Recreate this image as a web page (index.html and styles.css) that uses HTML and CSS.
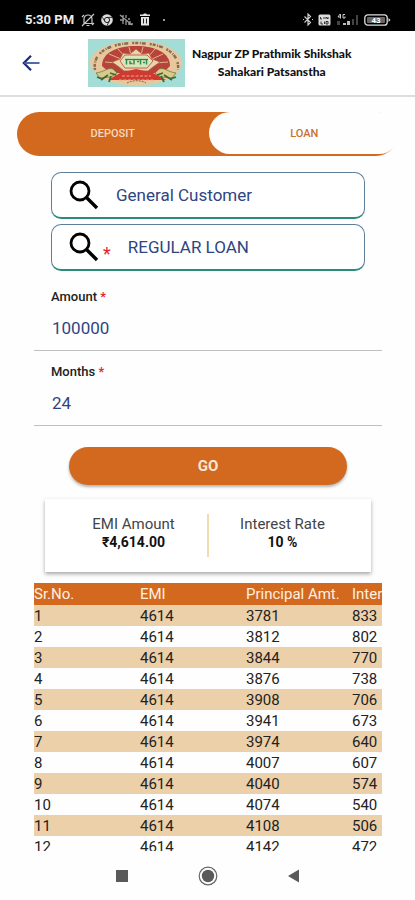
FILE: index.html
```
<!DOCTYPE html>
<html lang="en">
<head>
<meta charset="UTF-8">
<meta name="viewport" content="width=device-width, initial-scale=1">
<title>EMI Calculator</title>
<link rel="stylesheet" href="styles.css">
</head>
<body>
	<div class="status">
		<span class="time">5:30 PM</span>
		<svg class="s-bell" width="14" height="14" viewBox="0 0 14 14" fill="none" stroke="#c8c8c8" stroke-width="1.2"><path d="M3 10.500V6a4 4 0 0 1 8 0v4.500zM5.500 12.500h3M1 13L13 1M1 4l2-2M11 12l2-2"/></svg>
		<svg class="s-chrome" width="12" height="12" viewBox="0 0 12 12"><circle cx="6" cy="6" r="5.800" fill="#ddd"/><circle cx="6" cy="6" r="2.600" fill="#ddd" stroke="#222" stroke-width="1"/><path d="M6 3.400h5M3.800 7.300L1.400 3.300M8.200 7.300L6 11.500" stroke="#222" stroke-width=".9"/></svg>
		<svg class="s-mute" width="14" height="12" viewBox="0 0 14 12" fill="none" stroke="#999" stroke-width="1.300"><path d="M1 1l12 10M4 1v9M7 1v3M7 6v5M1 6h4M9 5h2M9 10h5M11 7v4"/></svg>
		<svg class="s-trash" width="12" height="13" viewBox="0 0 12 13"><path d="M1 1.500h3L5 .5h2l1 1h3v1.500H1zM2 4h8v8.500H2z" fill="#e4e4e4"/><path d="M4.500 5.500v5M7.500 5.500v5" stroke="#222"/></svg>
		<span class="dot"></span>
		<div class="status-right">
			<svg width="10" height="13" viewBox="0 0 10 13" fill="none" stroke="#ccc" stroke-width="1.200"><path d="M1.500 3.500l6 6L5 12V1l2.500 2.500-6 6M0 6.500h1M9 6.500h1"/></svg>
			<svg width="13" height="12" viewBox="0 0 13 12"><rect x=".5" y=".5" width="12" height="11" rx="1.500" fill="#ddd"/><path d="M2.500 3v2l1.500 0M6 3v2M8 5V3l2 2V3M3 7.500v2.500h2M6.500 7.500v2.500M8 10V7.500h2V10z" fill="none" stroke="#222" stroke-width=".9"/></svg>
			<svg class="s-signal" width="23" height="13" viewBox="0 0 23 13"><path d="M4 1L2 4h3M4.500 1v4.500M9 1.500H7v3.500h2V3.500" fill="none" stroke="#ccc"/><path d="M7 12v-2h3v2zM11 12V8h3v4z" fill="#bbb"/><path d="M1 8h3v4H1zM16 12V6h2v6zM20 12V2h2v10z" fill="#444"/></svg>
			<svg width="27" height="12" viewBox="0 0 27 12"><rect x=".8" y=".8" width="22.400" height="10.400" rx="3" fill="none" stroke="#ddd" stroke-width="1.300"/><rect x="3" y="3" width="18" height="6" rx="1" fill="#666"/><path d="M24.500 4v4l2-2z" fill="#ddd"/><text x="12" y="9" text-anchor="middle" class="battery-text">43</text></svg>
		</div>
	</div>

	<header class="header">
		<a href="#" class="back" aria-label="Back">
			<svg width="18" height="16" viewBox="0 0 18 16" fill="none" stroke="#1b2a7a" stroke-width="2.200"><path d="M9 .8L1.800 8 9 15.200"/><path d="M2 8h15.500" stroke="#3f5aa0" stroke-width="1.800"/></svg>
		</a>
		<svg class="logo" width="97" height="48" viewBox="0 0 97 48" role="img" aria-label="Nagpur ZP Prathmik Shikshak">
			<rect width="97" height="48" fill="#a3ddd5"/>
			<ellipse cx="48" cy="24" rx="46" ry="22.500" fill="#e9c79d"/>
			<path d="M7 31C4 12 24 4 48 4s44 8 42 27" fill="none" stroke="#80705a" stroke-width="2.500" stroke-dasharray="2 1 3 1.500 1 1 4 4"/>
			<path d="M14 27C14 14 28 7 48 7s34 7 34 20l-7 7H22z" fill="#b8433a"/>
			<path d="M17 23l13 1M21 15l12 5M30 10l7 8M41 8l2 8M55 8l-2 8M67 10l-7 8M75 15l-11 5M80 23l-13 1" stroke="#e1b38c"/>
			<path d="M24 23l8-3 3-6 7 1 6-5 6 5 7-1 3 6 8 3-7 5-5 4H36l-5-4z" fill="#e8d5ae" stroke="#a9613b" stroke-width=".8"/>
			<path d="M32 22l5-6h22l6 6-6 7H37z" fill="#dde3bb" stroke="#c7644e"/>
			<path d="M37 20.500h23" stroke="#26874b" stroke-width="1.300"/>
			<path d="M38.500 21v4.500M42 22v2.500h2.500M46 21v4.500M49 22.500h2M52.500 21v4.500M55 23.500h2M58.500 21v4.500" fill="none" stroke="#2f8f52" stroke-width="1.500"/>
			<path d="M32 34l16-4 17 4 13 7H20z" fill="#cf392f"/>
			<path d="M34 37h29M31 41h35" stroke="#eaa68b" stroke-dasharray="3 1.500"/>
			<path d="M39 44c6-3 14-3 19 0" fill="none" stroke="#8d6745" stroke-dasharray="2 1"/>
			<path d="M8 34c8-1 12-6 17-4l4 4-6 4-11 1z" fill="#d9c98d" stroke="#697b3c" stroke-width=".8"/>
			<path d="M88 34c-8-1-12-6-17-4l-4 4 6 4 11 1z" fill="#d9c98d" stroke="#697b3c" stroke-width=".8"/>
			<path d="M22 34l6 2M20 36l-7 5M23 37l-2 6M9 38l5 2M75 34l-6 2M76 36l8 5M73 37l3 6M88 38l-6 2" stroke="#3f6a35" stroke-width="1.800"/>
		</svg>
		<h1 class="title">Nagpur ZP Prathmik Shikshak<br>Sahakari Patsanstha</h1>
	</header>

	<main class="main">
		<div class="tabs">
			<button type="button" class="tab">DEPOSIT</button>
			<button type="button" class="tab active">LOAN</button>
		</div>

		<form class="form">
			<button type="button" class="picker">
				<svg width="30" height="30" viewBox="0 0 30 30" fill="none" stroke="#000"><circle cx="11" cy="11" r="9" stroke-width="2.800"/><path d="M17.500 17.500L28 28" stroke-width="3.400"/></svg>
				<span class="picker-text">General Customer</span>
			</button>
			<button type="button" class="picker">
				<svg width="30" height="30" viewBox="0 0 30 30" fill="none" stroke="#000"><circle cx="11" cy="11" r="9" stroke-width="2.800"/><path d="M17.500 17.500L28 28" stroke-width="3.400"/></svg>
				<span class="star big">*</span>
				<span class="picker-text">REGULAR LOAN</span>
			</button>

			<div class="field">
				<label for="amount">Amount <span class="star">*</span></label>
				<input type="text" id="amount" value="100000">
			</div>
			<div class="field">
				<label for="months">Months <span class="star">*</span></label>
				<input type="text" id="months" value="24">
			</div>

			<button type="button" class="go">GO</button>
		</form>

		<div class="result">
			<div class="result-item">EMI Amount<strong>₹4,614.00</strong></div>
			<div class="result-item">Interest Rate<strong>10 %</strong></div>
		</div>

		<div class="table-wrap">
			<table class="schedule">
				<thead>
					<tr><th>Sr.No.</th><th>EMI</th><th>Principal Amt.</th><th>Interest</th></tr>
				</thead>
				<tbody>
					<tr><td>1</td><td>4614</td><td>3781</td><td>833</td></tr>
					<tr><td>2</td><td>4614</td><td>3812</td><td>802</td></tr>
					<tr><td>3</td><td>4614</td><td>3844</td><td>770</td></tr>
					<tr><td>4</td><td>4614</td><td>3876</td><td>738</td></tr>
					<tr><td>5</td><td>4614</td><td>3908</td><td>706</td></tr>
					<tr><td>6</td><td>4614</td><td>3941</td><td>673</td></tr>
					<tr><td>7</td><td>4614</td><td>3974</td><td>640</td></tr>
					<tr><td>8</td><td>4614</td><td>4007</td><td>607</td></tr>
					<tr><td>9</td><td>4614</td><td>4040</td><td>574</td></tr>
					<tr><td>10</td><td>4614</td><td>4074</td><td>540</td></tr>
					<tr><td>11</td><td>4614</td><td>4108</td><td>506</td></tr>
					<tr><td>12</td><td>4614</td><td>4142</td><td>472</td></tr>
				</tbody>
			</table>
		</div>
	</main>

	<nav class="navbar">
		<button type="button" aria-label="Recent apps"><svg width="20" height="20" viewBox="0 0 20 20"><rect x="4" y="4" width="12" height="12" fill="#5a5a5a"/></svg></button>
		<button type="button" aria-label="Home"><svg width="20" height="20" viewBox="0 0 20 20"><circle cx="10" cy="10" r="8.800" fill="none" stroke="#666" stroke-width="1.200"/><circle cx="10" cy="10" r="6.200" fill="#5a5a5a"/></svg></button>
		<button type="button" aria-label="Back"><svg width="20" height="20" viewBox="0 0 20 20"><path d="M15 3.500v13L4 10z" fill="#5a5a5a"/></svg></button>
	</nav>
</body>
</html>
```

FILE: styles.css
```
* { padding: 0; margin: 0; box-sizing: border-box; }
body { display: flex; flex-direction: column; height: 100vh; overflow: hidden; background: #fefefe; font-family: Roboto, "Noto Sans", sans-serif; font-size: 16px; color: #222; }
button { border: none; background: none; font-family: inherit; cursor: pointer; }
svg { display: block; flex: none; }

/* status bar */
.status { display: flex; align-items: center; flex: none; height: 31px; padding: 8px 24px 0 25px; background: #000; color: #eee; }
.time { margin-right: 7px; font-size: 13px; font-weight: bold; }
.s-bell, .s-chrome, .s-mute { margin-right: 6px; }
.dot { width: 2px; height: 2px; margin-left: 12px; border-radius: 50%; background: #ccc; }
.status-right { display: flex; align-items: center; gap: 5px; margin-left: auto; }
.battery-text { font-size: 8px; font-weight: bold; fill: #fff; }

/* header */
.header { display: flex; align-items: center; flex: none; height: 66px; padding: 0 24px 0 22px; border-bottom: 2px solid #dcdedf; background: #fff; }
.back { margin-right: 48px; }
.title { margin-left: 7px; font-family: Lato, sans-serif; font-size: 12px; line-height: 18px; font-weight: 900; text-align: center; color: #111; }

.main { flex: 1; min-height: 0; overflow: hidden; padding-top: 15px; }

/* tabs */
.tabs { display: flex; height: 44px; margin: 0 17px; padding-bottom: 2px; border-radius: 22px; background: #d2691e; }
.tab { flex: 1; font-size: 11px; font-weight: 500; color: #f6d9c3; }
.tab.active { margin-right: -2px; border-radius: 22px; background: #fefefe; color: #c9702f; }

/* form */
.form { display: flex; flex-direction: column; padding: 16px 33px 0 34px; }
.picker { display: flex; align-items: center; height: 47px; margin: 0 17px 5px; padding: 0 17px; border: 1px solid #5c7f9b; border-bottom: 2px solid #2c8a78; border-radius: 10px; background: #fff; }
.picker-text { margin-left: 17px; font-size: 17px; color: #2f4580; }
.star { color: #e8222b; }
.star.big { margin: 14px 0 0 4px; font-size: 18px; line-height: 18px; }
.field { height: 75px; padding: 11px 17px 0; border-bottom: 1px solid #c0c0c0; }
.field label { display: block; font-size: 13px; line-height: 20px; font-weight: 500; }
.field input { width: 100%; height: 42px; padding-left: 1px; border: none; outline: none; background: none; font-family: inherit; font-size: 17px; color: #2f4580; }
.go { height: 38px; margin: 21px 35px 0; border-radius: 19px; background: #d2691e; box-shadow: 0 2px 3px rgba(0, 0, 0, .3); color: #fbe6d6; font-size: 15px; font-weight: bold; }

/* emi result */
.result { display: flex; height: 73px; margin: 14px 44px 0 45px; padding: 15px 0; background: #fff; box-shadow: 0 2px 4px rgba(0, 0, 0, .35); }
.result-item { flex: 1; padding: 1px 10px; text-align: center; font-size: 15px; line-height: 18px; color: #444; }
.result-item + .result-item { padding-right: 25px; border-left: 2px solid #f0dcae; }
.result-item:first-child { padding-left: 25px; }
.result-item strong { display: block; font-size: 14px; color: #111; }

/* schedule */
.table-wrap { margin: 11px 33px 0 34px; overflow: hidden; }
.schedule { width: 424px; table-layout: fixed; border-collapse: collapse; }
.schedule th, .schedule td { height: 21px; padding-top: 2px; font-size: 15px; line-height: 19px; text-align: left; }
.schedule th { height: 22px; padding-bottom: 1px; background: #d2691e; color: #fff0e4; font-weight: 400; }
.schedule tbody tr:nth-child(odd) { background: #ecd0a9; }

/* android buttons */
.navbar { display: flex; align-items: center; justify-content: center; gap: 66px; flex: none; height: 49px; background: #fefefe; }
```
